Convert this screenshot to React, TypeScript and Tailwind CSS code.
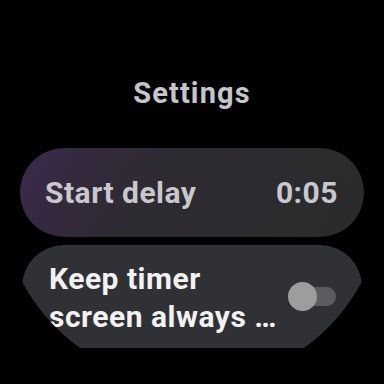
export default function App() {
  return (
    <div className="w-[384px] h-[384px] bg-black overflow-hidden">
      {/* round watch face */}
      <div
        className="w-[384px] h-[384px] rounded-full overflow-hidden flex flex-col items-center"
        style={{ fontFamily: "Roboto, 'Noto Sans', sans-serif" }}
      >
        <h1 className="mt-[75px] text-[29px] leading-[36px] font-bold tracking-[1.1px] text-[#c5c6cb]">
          Settings
        </h1>

        {/* Start delay chip */}
        <div className="mt-[37px] w-[344px] h-[89px] shrink-0 rounded-full bg-[linear-gradient(120deg,#3c2a4e_0%,#33293c_20%,#2d2b30_42%,#2b2b2d_100%)] flex items-center justify-between pl-[25px] pr-[26px]">
          <span className="text-[30px] leading-[38px] font-bold tracking-[0.5px] text-[#c8c8cd]">Start delay</span>
          <span className="text-[30px] leading-[38px] font-bold tracking-[0.5px] text-[#c8c8cd]">0:05</span>
        </div>

        {/* Keep screen on chip, cut off at the bottom */}
        <div className="mt-[8px] w-[340px] h-[103px] shrink-0 overflow-hidden">
          <div className="h-[130px] rounded-[42px] bg-[#303134] flex items-start justify-between pl-[27px] pr-[26px] pt-[15px]">
            <div className="text-[30px] leading-[38px] font-bold tracking-[0.5px] text-[#f2f2f2] whitespace-nowrap">
              <div>Keep timer</div>
              <div>screen always …</div>
            </div>
            <div className="relative mt-[22px] w-[48px] h-[29px] shrink-0">
              <div className="absolute right-0 top-[5px] w-[40px] h-[19px] rounded-full bg-[#5b5c5f]" />
              <div className="absolute left-0 top-0 w-[29px] h-[29px] rounded-full bg-[#9d9d9f]" />
            </div>
          </div>
        </div>
      </div>
    </div>
  );
}
